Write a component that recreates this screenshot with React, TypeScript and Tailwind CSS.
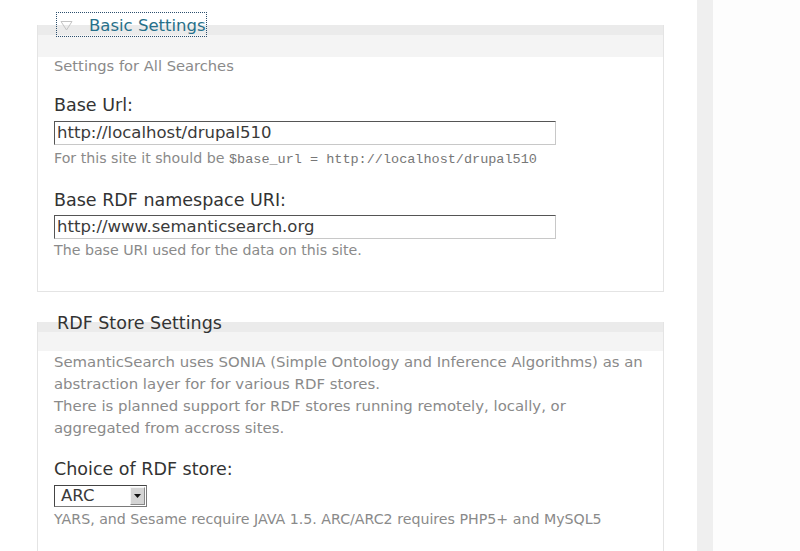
import React from 'react';

const sans = { fontFamily: '"DejaVu Sans", Verdana, sans-serif' };

const TextField: React.FC<{ value: string }> = ({ value }) => (
  <div className="w-[502px] h-[24px] border border-[#c8c8c8] border-t-[#555] border-l-[#555] bg-white flex items-center pl-[2px] text-[16.5px] text-[#3a3a3a] leading-none">
    {value}
  </div>
);

const Band: React.FC<{ children: React.ReactNode; height: string }> = ({ children, height }) => (
  <div className={`bg-[linear-gradient(#ebebeb_0,#ebebeb_10px,#f4f4f4_10px)] ${height}`}>{children}</div>
);

export default function App() {
  return (
    <div className="flex min-h-[551px] bg-[#fdfdfd]" style={sans}>
      <main className="w-[697px] bg-white pl-[37px] pt-[12px] pb-10">
        {/* Basic settings */}
        <section className="w-[627px] border border-[#e4e4e4] border-t-0 mt-[13px] bg-white">
          <Band height="h-[32px]">
            <div className="flex pl-[18px]">
              <button className="-mt-[13px] h-[25px] w-[151px] border border-dotted border-[#2c4f6e] flex items-center pl-[3px] pt-[3px] gap-[16px] text-[16.5px] text-[#27708a] leading-none">
                <svg width="13" height="11" viewBox="0 0 13 11" className="-mt-[2px]">
                  <path d="M1 1.5 H12 L6.5 10 Z" fill="none" stroke="#c4c4c4" strokeWidth="1" />
                </svg>
                Basic Settings
              </button>
            </div>
          </Band>
          <div className="px-[16px] pb-[32px]">
            <p className="-mt-[2px] text-[14.7px] leading-[22px] text-[#8a8a8a]">Settings for All Searches</p>
            <label className="block mt-[18px] text-[17.5px] leading-[20px] text-[#333]">Base Url:</label>
            <div className="mt-[6px]">
              <TextField value="http://localhost/drupal510" />
            </div>
            <p className="mt-[4px] text-[14.2px] leading-[18px] text-[#8a8a8a]">
              For this site it should be{' '}
              <code className="text-[13.5px] text-[#777]" style={{ fontFamily: '"Liberation Mono", monospace' }}>
                $base_url = http://localhost/drupal510
              </code>
            </p>
            <label className="block mt-[21px] text-[17.5px] leading-[20px] text-[#333]">Base RDF namespace URI:</label>
            <div className="mt-[5px]">
              <TextField value="http://www.semanticsearch.org" />
            </div>
            <p className="mt-[2px] text-[14.2px] leading-[18px] text-[#8a8a8a]">The base URI used for the data on this site.</p>
          </div>
        </section>

        {/* RDF store settings */}
        <section className="w-[627px] border border-[#e4e4e4] border-t-0 mt-[30px] bg-white">
          <Band height="h-[29px]">
            <h3 className="pl-[19px] -translate-y-[9px] text-[17.5px] leading-[20px] text-[#333]">RDF Store Settings</h3>
          </Band>
          <div className="px-[16px] pb-10">
            <p className="text-[14.9px] leading-[22px] text-[#8a8a8a]">
              SemanticSearch uses SONIA (Simple Ontology and Inference Algorithms) as an abstraction layer for for various RDF stores.
              <br />
              There is planned support for RDF stores running remotely, locally, or aggregated from accross sites.
            </p>
            <label className="block mt-[20px] text-[17.5px] leading-[20px] text-[#333]">Choice of RDF store:</label>
            <div className="mt-[6px] w-[93px] h-[22px] border border-[#7a7a7a] border-t-[#444] border-l-[#444] bg-white flex items-center">
              <span className="flex-1 pl-[6px] text-[16.5px] leading-none text-[#3a3a3a]">ARC</span>
              <span className="w-[15px] h-[18px] mr-[1px] bg-[#d4d4d4] border border-[#f4f4f4] border-r-[#888] border-b-[#888] flex items-center justify-center">
                <svg width="7" height="4" viewBox="0 0 7 4">
                  <path d="M0 0 H7 L3.5 4 Z" fill="#111" />
                </svg>
              </span>
            </div>
            <p className="mt-[3px] text-[14.2px] leading-[18px] text-[#8a8a8a]">
              YARS, and Sesame recquire JAVA 1.5. ARC/ARC2 requires PHP5+ and MySQL5
            </p>
          </div>
        </section>
      </main>
      <div className="w-[16px] bg-[#efefef]" />
      <div className="flex-1" />
    </div>
  );
}
